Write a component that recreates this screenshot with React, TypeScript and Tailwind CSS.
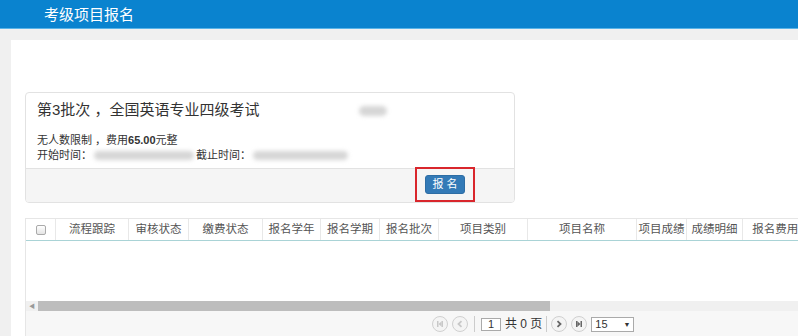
import { ReactNode } from "react";

const cols: { label: string; w: number }[] = [
  { label: "流程跟踪", w: 73 },
  { label: "审核状态", w: 60 },
  { label: "缴费状态", w: 74 },
  { label: "报名学年", w: 58 },
  { label: "报名学期", w: 59 },
  { label: "报名批次", w: 59 },
  { label: "项目类别", w: 89 },
  { label: "项目名称", w: 109 },
  { label: "项目成绩", w: 50 },
  { label: "成绩明细", w: 56 },
  { label: "报名费用（元）", w: 100 },
];

function Blur({ className }: { className: string }) {
  return <div className={`rounded-full bg-[#d6d6d6] blur-[2px] ${className}`} />;
}

function PagerBtn({ children }: { children: ReactNode }) {
  return (
    <div className="w-[16px] h-[16px] rounded-full border border-[#d0d0d0] bg-[#f4f4f4] flex items-center justify-center">
      {children}
    </div>
  );
}

export default function App() {
  return (
    <div
      className="w-[798px] h-[336px] overflow-hidden bg-[#f0f0f0] text-[#333]"
      style={{ fontFamily: '"Liberation Sans", "Noto Sans CJK SC", sans-serif' }}
    >
      <div className="h-[29px] bg-[#0a83cf] border-b border-[#5ab4e8] flex items-center pl-[44px]">
        <span className="text-white text-[15px] leading-none">考级项目报名</span>
      </div>
      <div className="h-[11px]" />
      <div className="ml-[11px] h-[296px] bg-white pl-[14px] pt-[52px]">
        {/* card */}
        <div className="w-[490px] h-[111px] border border-[#e2e2e2] rounded-[4px] flex flex-col overflow-hidden">
          <div className="h-[77px] pl-[11px] pt-[8px] relative">
            <div className="text-[15px] leading-[18px] text-[#333]">第3批次 ，全国英语专业四级考试</div>
            <Blur className="absolute left-[333px] top-[13px] w-[28px] h-[10px]" />
            <div className="mt-[14px] text-[11px] leading-[15px]">
              无人数限制 ，费用<b>65.00</b>元整
            </div>
            <div className="flex items-center text-[11px] leading-[15px]">
              <span>开始时间：</span>
              <Blur className="w-[100px] h-[9px] ml-[2px]" />
              <span className="ml-[2px]">截止时间：</span>
              <Blur className="w-[95px] h-[9px] ml-[2px]" />
            </div>
          </div>
          <div className="flex-1 bg-[#f5f5f5] border-t border-[#e2e2e2] flex justify-end pr-[39px]">
            <div className="-mt-[2px] w-[60px] h-[35px] border-2 border-[#d9262c] flex items-center justify-center">
              <div className="w-[40px] h-[19px] bg-[#337ab7] rounded-[3px] border border-[#2e6da4] text-white text-[11px] flex items-center justify-center tracking-[3px] pl-[3px]">
                报名
              </div>
            </div>
          </div>
        </div>

        {/* table */}
        <div className="mt-[15px] border-l border-t border-[#e6e6e6] h-[119px] flex flex-col">
          <div className="h-[22px] flex border-b border-[#a9d3d6] text-[11.5px] text-[#555] whitespace-nowrap overflow-hidden">
            <div className="w-[30px] shrink-0 flex items-center justify-center border-r border-[#e8e8e8]">
              <div className="w-[10px] h-[10px] rounded-[2px] border border-[#aaa] bg-gradient-to-b from-white to-[#e4e4e4]" />
            </div>
            {cols.map((c) => (
              <div
                key={c.label}
                style={{ width: c.w }}
                className="shrink-0 flex items-center justify-center border-r border-[#e8e8e8] overflow-hidden"
              >
                {c.label}
              </div>
            ))}
          </div>
          <div className="h-[60px]" />
          <div className="h-[10px] bg-[#f0f0f0] flex items-center">
            <div className="w-[12px] flex items-center justify-center text-[#999] text-[6px]">◀</div>
            <div className="w-[512px] h-[10px] bg-[#bdbdbd]" />
          </div>
          <div className="flex-1 bg-[#f7f7f7] flex items-center pl-[406px] gap-[4px] text-[12px] text-[#333]">
            <PagerBtn>
              <svg width="8" height="8" viewBox="0 0 8 8" fill="#c8c8c8">
                <rect x="1" y="1" width="1.5" height="6" />
                <rect x="5.5" y="1" width="1.5" height="6" />
                <path d="M2.5 4 L5.5 1.5 L5.5 6.5 Z" />
              </svg>
            </PagerBtn>
            <PagerBtn>
              <svg width="8" height="8" viewBox="0 0 8 8" fill="none" stroke="#c8c8c8" strokeWidth="1.8">
                <path d="M5.5 1.2 L2.5 4 L5.5 6.8" />
              </svg>
            </PagerBtn>
            <div className="w-px h-[16px] bg-[#ccc] mx-[2px]" />
            <div className="w-[20px] h-[13px] border border-[#aaa] bg-white text-[11px] flex items-center justify-center leading-none">
              1
            </div>
            <span className="text-[12px]">共 0 页</span>
            <div className="w-px h-[16px] bg-[#ccc]" />
            <PagerBtn>
              <svg width="8" height="8" viewBox="0 0 8 8" fill="none" stroke="#666" strokeWidth="1.8">
                <path d="M2.5 1.2 L5.5 4 L2.5 6.8" />
              </svg>
            </PagerBtn>
            <PagerBtn>
              <svg width="8" height="8" viewBox="0 0 8 8" fill="#666">
                <rect x="1" y="1" width="1.5" height="6" />
                <rect x="5.5" y="1" width="1.5" height="6" />
                <path d="M2.5 1.5 L5.5 4 L2.5 6.5 Z" />
              </svg>
            </PagerBtn>
            <div className="w-[43px] h-[15px] border border-[#aaa] bg-white text-[11px] flex items-center justify-between px-[3px] leading-none">
              <span>15</span>
              <span className="text-[7px]">▼</span>
            </div>
          </div>
        </div>
      </div>
    </div>
  );
}
